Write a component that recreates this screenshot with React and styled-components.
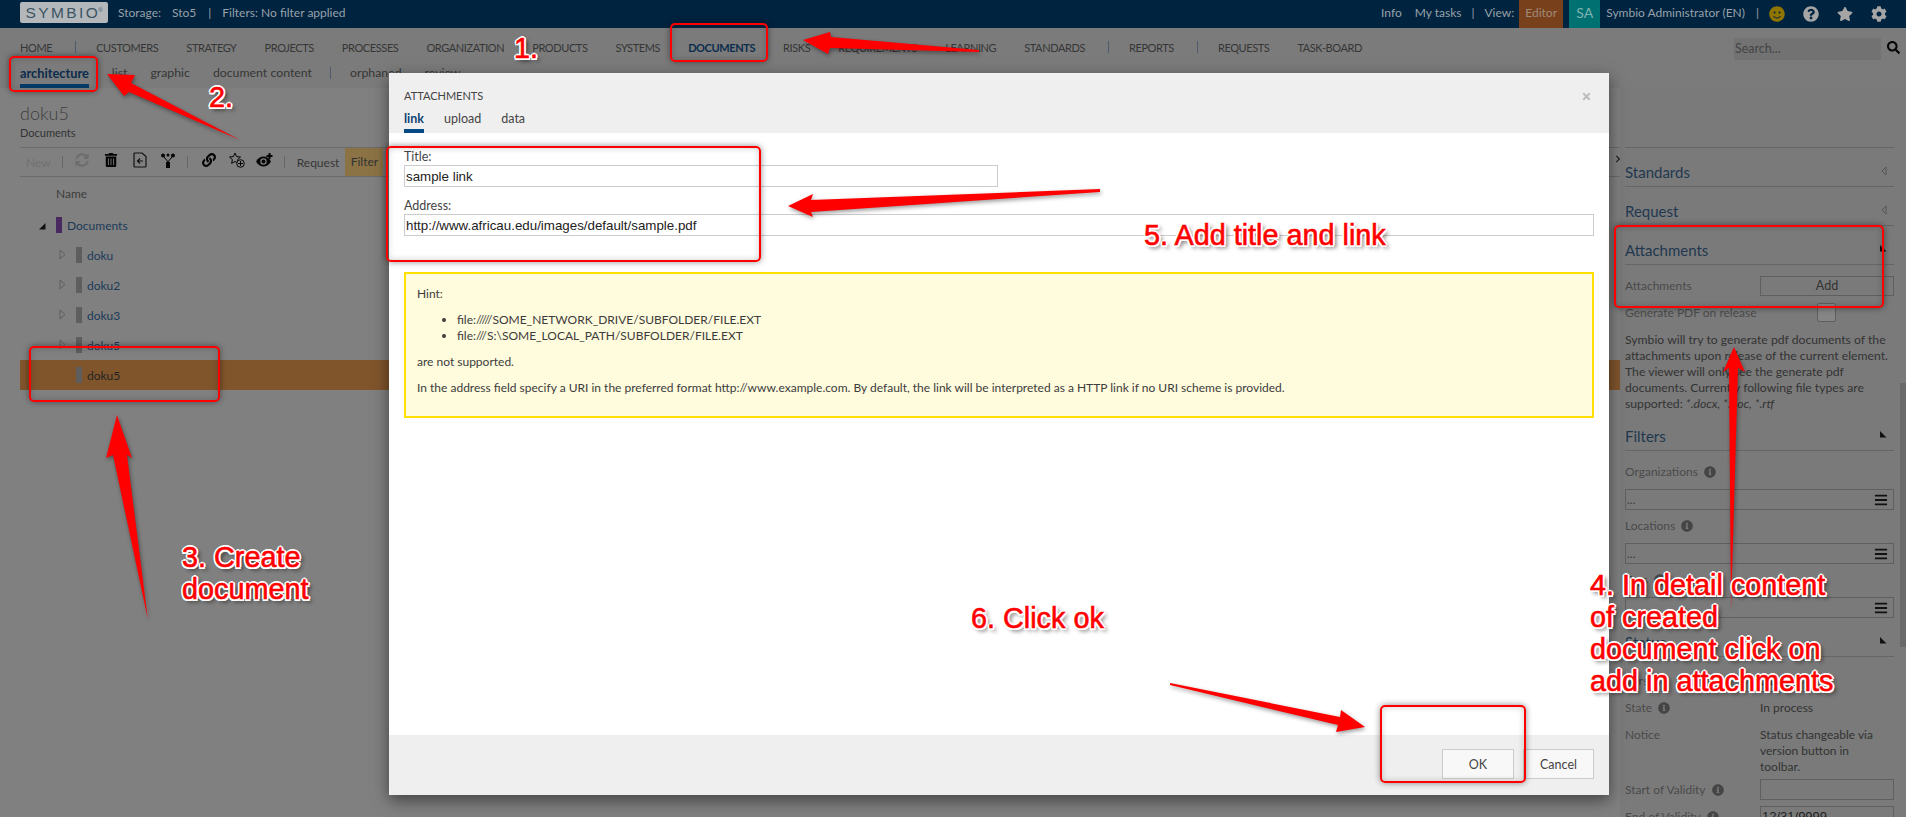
import React from "react";
import styled, { createGlobalStyle } from "styled-components";
import {
  FaBars,
  FaChevronRight,
  FaCog,
  FaInfoCircle,
  FaLink,
  FaQuestionCircle,
  FaSearch,
  FaSmile,
  FaStar,
  FaSyncAlt,
  FaTimes,
  FaTrashAlt,
} from "react-icons/fa";

const GlobalStyle = createGlobalStyle`
  html, body {
    margin: 0;
    height: 100%;
    overflow: hidden;
    background: #808080;
    font-family: Lato, "Open Sans", "Liberation Sans", sans-serif;
    font-size: 12px;
    color: #333;
  }
  * { box-sizing: border-box; }
`;

const Page = styled.div`
  position: relative;
  width: 1906px;
  height: 817px;
  overflow: hidden;
  display: flex;
  flex-direction: column;
`;

const TopBar = styled.header`
  height: 28px;
  flex: none;
  background: #00233f;
  color: #97a1aa;
  display: flex;
  align-items: stretch;
  padding: 0 19px 0 20px;
  font-size: 12px;
  line-height: 26px;
`;

const Logo = styled.div`
  width: 88px;
  height: 21px;
  margin: 2px 10px 0 0;
  background: #b4b8bb;
  border-radius: 2px;
  color: #3b5563;
  font-family: "Liberation Sans", sans-serif;
  font-size: 15.5px;
  line-height: 21px;
  letter-spacing: 2.4px;
  text-align: center;
  white-space: nowrap;
`;

const LogoMark = styled.sup`
  margin-left: -2px;
  font-size: 6px;
  letter-spacing: 0;
  line-height: 0;
`;

const TopText = styled.span`
  margin-left: ${({ $left }) => $left || 0}px;
  white-space: nowrap;
`;

const TopSpacer = styled.div`
  flex: 1;
`;

const EditorBadge = styled.span`
  width: 44px;
  margin: 0 6px 0 5px;
  background: #78401b;
  color: #a08a78;
  text-align: center;
`;

const UserBadge = styled.span`
  width: 31px;
  margin-right: 6px;
  background: #007070;
  color: #7fb3b3;
  text-align: center;
  font-size: 14px;
`;

const TopIcon = styled.span`
  display: flex;
  align-items: center;
  margin-left: ${({ $left }) => $left}px;
  color: ${({ $color }) => $color || "#a5a5a5"};
  font-size: 16px;
`;

const Nav = styled.nav`
  height: 60px;
  flex: none;
  position: relative;
  background: #7b7b7b;
  padding: 0 20px;
  color: #363636;
`;

const NavRow = styled.div`
  display: flex;
  align-items: center;
  height: 36px;
  padding-top: 2px;
  font-size: 11px;
  letter-spacing: -0.4px;
  white-space: nowrap;
`;

const NavItem = styled.span`
  margin-right: 28px;
  font-weight: ${({ $active }) => ($active ? 700 : 400)};
  color: ${({ $active }) => ($active ? "#0b2c4c" : "inherit")};
`;

const NavDivider = styled.span`
  width: 1px;
  height: 12px;
  margin: 0 20px 0 -5px;
  background: #4d5c6c;
`;

const SubRow = styled.div`
  display: flex;
  height: 24px;
  font-size: 12.3px;
  white-space: nowrap;
`;

const SubItem = styled.span`
  height: 24px;
  margin-right: 23px;
  font-size: ${({ $active }) => ($active ? "12.8px" : "inherit")};
  line-height: 18px;
  font-weight: ${({ $active }) => ($active ? 700 : 400)};
  color: ${({ $active }) => ($active ? "#0b2c4c" : "inherit")};
  border-bottom: ${({ $active }) => ($active ? "4px solid #063a68" : "0")};
`;

const SubDivider = styled(NavDivider)`
  margin: 3px 19px 0 -5px;
`;

const SearchBox = styled.div`
  position: absolute;
  top: 10px;
  left: 1734px;
  width: 147px;
  height: 22px;
  padding-left: 1px;
  background: #727272;
  color: #444;
  font-size: 12.5px;
  line-height: 22px;
`;

const SearchIcon = styled(FaSearch)`
  position: absolute;
  top: 13px;
  left: 1887px;
  font-size: 13px;
  color: #050505;
`;

const Main = styled.main`
  flex: 1;
  min-height: 0;
  display: flex;
`;

const LeftPanel = styled.section`
  width: 1620px;
  flex: none;
  padding: 14px 0 0 20px;
`;

const PageTitle = styled.h1`
  margin: 0;
  font-size: 18px;
  font-weight: 300;
  line-height: 22px;
  color: #3e3e3e;
`;

const PageSub = styled.div`
  height: 23px;
  font-size: 11px;
  line-height: 17px;
  color: #333;
`;

const Toolbar = styled.div`
  display: flex;
  align-items: center;
  height: 30px;
  border-top: 1px solid #6a6a6a;
  border-bottom: 1px solid #6a6a6a;
  font-size: 12px;
`;

const ToolText = styled.span`
  margin-left: ${({ $left }) => $left || 0}px;
  color: ${({ $muted }) => ($muted ? "#717171" : "#373737")};
`;

const ToolDivider = styled.span`
  width: 1px;
  height: 12px;
  margin-left: ${({ $left }) => $left}px;
  background: #666;
`;

const ToolIcon = styled.span`
  display: flex;
  align-items: center;
  margin-left: ${({ $left }) => $left}px;
  margin-top: -4px;
  color: ${({ $muted }) => ($muted ? "#6d6d6d" : "#050505")};
  font-size: 14px;
`;

const FilterButton = styled.span`
  width: 38px;
  height: 28px;
  margin-left: 6px;
  background: #8c7346;
  color: #333;
  line-height: 28px;
  text-align: center;
`;

const TreeHead = styled.div`
  height: 33px;
  padding-left: 36px;
  line-height: 34px;
  font-size: 12px;
  color: #3d3d3d;
`;

const TreeRow = styled.div`
  display: flex;
  align-items: center;
  height: 30px;
  padding-left: ${({ $level }) => ($level ? 39 : 19)}px;
  background: ${({ $selected }) => ($selected ? "#80552c" : "transparent")};
  font-size: 12px;
  color: ${({ $selected }) => ($selected ? "#242424" : "#1c3a58")};
`;

const Toggle = styled.span`
  width: 17px;
  flex: none;
`;

const ColorTag = styled.span`
  width: 6px;
  height: 16px;
  margin-right: 5px;
  background: ${({ $color }) => $color};
`;

const Sidebar = styled.aside`
  position: relative;
  flex: 1;
  min-width: 0;
  height: 729px;
  background: #7a7a7a;
  padding: 59px 12px 0 5px;
`;

const SidebarToggle = styled(FaChevronRight)`
  position: absolute;
  top: 67px;
  left: -6px;
  font-size: 8px;
  color: #222;
`;

const SidebarThumb = styled.div`
  position: absolute;
  top: 295px;
  right: 0;
  width: 6px;
  height: 264px;
  background: #6a6a6a;
`;

const SectionHead = styled.h3`
  display: flex;
  align-items: flex-end;
  justify-content: space-between;
  height: 39px;
  margin: 0;
  padding: 0 7px 4px 0;
  border-bottom: 1px solid #666;
  font-size: 15px;
  font-weight: 400;
  line-height: 20px;
  color: #1f3850;
`;

const SidebarTop = styled.div`
  border-top: 1px solid #666;
`;

const Row = styled.div`
  display: grid;
  grid-template-columns: 135px 134px;
  margin-top: ${({ $top }) => $top || 0}px;
  font-size: 12px;
  line-height: 16px;
`;

const Label = styled.span`
  display: flex;
  align-items: ${({ $top }) => ($top ? "flex-start" : "center")};
  gap: 6px;
  color: #4a4a4a;
  white-space: nowrap;
`;

const Value = styled.span`
  max-width: 118px;
  color: #333;
`;

const AddButton = styled.div`
  height: 20px;
  border: 1px solid #5f5f5f;
  color: #333;
  font-size: 12.5px;
  line-height: 17px;
  text-align: center;
`;

const Checkbox = styled.div`
  width: 19px;
  height: 19px;
  margin-left: 57px;
  border: 1px solid #5f5f5f;
  border-radius: 2px;
  background: #858585;
`;

const Help = styled.p`
  margin: 10px 0 0;
  font-size: 12.2px;
  line-height: 16px;
  color: #333;
`;

const FieldLabel = styled.div`
  display: flex;
  align-items: center;
  gap: 6px;
  margin-top: ${({ $top }) => $top}px;
  margin-bottom: 9px;
  font-size: 12px;
  line-height: 16px;
  color: #4a4a4a;
`;

const SelectField = styled.div`
  display: flex;
  align-items: center;
  justify-content: space-between;
  height: 21px;
  padding: 0 5px 0 1px;
  border: 1px solid #5f5f5f;
  font-size: 12px;
  line-height: 16px;
  color: #3c3c3c;
`;

const DateField = styled.div`
  height: 21px;
  border: 1px solid #5f5f5f;
  padding-left: 1px;
  font-family: "Liberation Sans", sans-serif;
  font-size: 13px;
  line-height: 20px;
  color: #222;
`;

const Modal = styled.div`
  position: absolute;
  top: 73px;
  left: 389px;
  width: 1220px;
  height: 722px;
  display: flex;
  flex-direction: column;
  background: #fff;
  box-shadow: 0 5px 15px rgba(0, 0, 0, 0.5);
`;

const ModalHead = styled.div`
  position: relative;
  height: 60px;
  flex: none;
  padding: 15px 15px 0;
  background: #efefef;
  color: #444;
`;

const ModalTitle = styled.div`
  font-size: 11px;
  line-height: 16px;
`;

const CloseIcon = styled(FaTimes)`
  position: absolute;
  top: 18px;
  right: 17px;
  color: #bcbcbc;
  font-size: 11px;
`;

const Tabs = styled.div`
  display: flex;
  gap: 20px;
  margin-top: 6px;
`;

const Tab = styled.span`
  height: 23px;
  font-size: 12.5px;
  line-height: 17px;
  font-weight: ${({ $active }) => ($active ? 700 : 400)};
  color: ${({ $active }) => ($active ? "#0f4474" : "#444")};
  border-bottom: ${({ $active }) => ($active ? "4px solid #064a85" : "0")};
`;

const ModalBody = styled.div`
  flex: 1;
  padding: 16px 15px 0;
`;

const FormLabel = styled.label`
  display: block;
  margin-top: ${({ $top }) => $top || 0}px;
  font-size: 12.5px;
  line-height: 16px;
  color: #444;
`;

const TextInput = styled.input`
  display: block;
  width: ${({ $wide }) => ($wide ? "100%" : "594px")};
  height: 22px;
  padding: 0 1px;
  border: 1px solid #ccc;
  outline: none;
  font-family: "Liberation Sans", sans-serif;
  font-size: 13.33px;
  color: #222;
`;

const HintBox = styled.div`
  height: 146px;
  margin-top: 36px;
  padding: 12px 11px 0;
  border: 2px solid #ffe000;
  background: #fffbdd;
  font-size: 12px;
  line-height: 16px;
  color: #3c3c3c;
  p {
    margin: 0 0 10px;
  }
  ul {
    margin: 0 0 10px;
    padding-left: 40px;
  }
`;

const ModalFoot = styled.div`
  display: flex;
  justify-content: flex-end;
  gap: 9px;
  height: 60px;
  flex: none;
  padding: 14px 15px 0;
  background: #efefef;
`;

const FootButton = styled.button`
  width: ${({ $width }) => $width}px;
  height: 30px;
  padding: 0;
  border: 1px solid #ccc;
  background: #f8f8f8;
  font-family: inherit;
  font-size: 12.5px;
  color: #444;
`;

const Mark = styled.div`
  position: absolute;
  left: ${({ $x }) => $x}px;
  top: ${({ $y }) => $y}px;
  width: ${({ $w }) => $w}px;
  height: ${({ $h }) => $h}px;
  border: 2px solid #f00;
  border-radius: 5px;
  box-shadow: 0 0 6px rgba(0, 0, 0, 0.45), inset 0 0 6px rgba(0, 0, 0, 0.2);
`;

const Note = styled.div`
  position: absolute;
  left: ${({ $x }) => $x}px;
  top: ${({ $y }) => $y}px;
  font-family: "Liberation Sans", sans-serif;
  font-size: 28.8px;
  line-height: 32px;
  color: #f00;
  white-space: nowrap;
  -webkit-text-stroke: 0.6px #f00;
  text-shadow: 2px 0 0 #fff, -2px 0 0 #fff, 0 2px 0 #fff, 0 -2px 0 #fff,
    1.5px 1.5px 0 #fff, -1.5px -1.5px 0 #fff, 1.5px -1.5px 0 #fff, -1.5px 1.5px 0 #fff,
    3px 3px 4px rgba(0, 0, 0, 0.7);
`;

const Arrows = styled.svg`
  position: absolute;
  top: 0;
  left: 0;
  filter: drop-shadow(1px 2px 2px rgba(0, 0, 0, 0.4));
  pointer-events: none;
`;

const navItems = ["CUSTOMERS", "STRATEGY", "PROJECTS", "PROCESSES", "ORGANIZATION", "PRODUCTS", "SYSTEMS"];
const navItems2 = ["RISKS", "REQUIREMENTS", "LEARNING", "STANDARDS"];

const arrowShapes = [
  "803,40 830,32 831,37 979,50 979,52 830,48 828,54",
  "107,74 135,75 131,83 240,140 129,92 124,96",
  "117,415 132,458 127,455 148,620 113,455 106,458",
  "788,206 813,194 811,200 1100,189 1100,192 811,212 813,217",
  "1734,347 1745,372 1738,368 1731,610 1729,368 1723,372",
  "1170,683 1340,717 1341,710 1365,727 1336,732 1338,725 1170,685",
];

const TreeArrow = ({ open }) =>
  open ? (
    <svg width="7" height="7" viewBox="0 0 7 7">
      <path d="M0 6.500h6.500V0z" fill="#111" />
    </svg>
  ) : (
    <svg width="7" height="11" viewBox="0 0 7 11">
      <path d="M1 1l5 4.500L1 10z" fill="none" stroke="#5e5e5e" />
    </svg>
  );

const SectionArrow = ({ open }) =>
  open ? (
    <svg width="7" height="7" viewBox="0 0 7 7" style={{ marginBottom: 8 }}>
      <path d="M0 0l6.500 6.500H0z" fill="#111" />
    </svg>
  ) : (
    <svg width="6" height="10" viewBox="0 0 6 10" style={{ marginBottom: 6 }}>
      <path d="M5 1L1 5l4 4z" fill="none" stroke="#555" />
    </svg>
  );

const DocIcon = () => (
  <svg width="14" height="16" viewBox="0 0 14 16" fill="none" stroke="#111" strokeWidth="1.2">
    <path d="M2 1h7l4 3.500V14a1 1 0 0 1-1 1H2a1 1 0 0 1-1-1V2a1 1 0 0 1 1-1z" />
    <path d="M10 9H4.500M7 6.500L4.500 9 7 11.500" />
  </svg>
);

const TreeIcon = () => (
  <svg width="14" height="15" viewBox="0 0 14 15" fill="#050505">
    <circle cx="2" cy="2.500" r="2" />
    <circle cx="12" cy="2.500" r="2" />
    <circle cx="7" cy="2" r="1.500" />
    <rect x="5" y="9" width="4" height="6" />
    <path d="M2 2.500L7 9l5-6.500" fill="none" stroke="#050505" />
  </svg>
);

const StarPlus = () => (
  <svg width="16" height="16" viewBox="0 0 16 16" fill="none" stroke="#050505">
    <path d="M6 1l1.600 3.600 3.900.4-2.900 2.600.8 3.800L6 9.500 2.600 11.400l.8-3.800L.5 5l3.900-.4z" />
    <circle cx="11.500" cy="11.500" r="3.800" fill="#808080" />
    <path d="M11.500 9v5M9 11.500h5" />
  </svg>
);

const EyePlus = () => (
  <svg width="17" height="15" viewBox="0 0 17 15">
    <path d="M0 8.500C2 5 4.500 3.500 7.500 3.500s5.500 1.500 7.500 5c-2 3.500-4.500 5-7.500 5S2 12 0 8.500z" fill="#050505" />
    <circle cx="7.500" cy="8.500" r="3.200" fill="#808080" />
    <circle cx="7.500" cy="8.500" r="2" fill="#050505" />
    <path d="M13.500 0v6M10.500 3h6" stroke="#050505" strokeWidth="2" />
  </svg>
);

const App = () => (
  <Page>
    <GlobalStyle />
    <TopBar>
      <Logo>
        SYMBIO<LogoMark>®</LogoMark>
      </Logo>
      <TopText>Storage:</TopText>
      <TopText $left={11}>Sto5</TopText>
      <TopText $left={12}>|</TopText>
      <TopText $left={11}>Filters: No filter applied</TopText>
      <TopSpacer />
      <TopText>Info</TopText>
      <TopText $left={13}>My tasks</TopText>
      <TopText $left={10}>|</TopText>
      <TopText $left={10}>View:</TopText>
      <EditorBadge>Editor</EditorBadge>
      <UserBadge>SA</UserBadge>
      <TopText>Symbio Administrator (EN)</TopText>
      <TopText $left={11}>|</TopText>
      <TopIcon $left={10} $color="#8f7500">
        <FaSmile />
      </TopIcon>
      <TopIcon $left={18}>
        <FaQuestionCircle />
      </TopIcon>
      <TopIcon $left={18}>
        <FaStar />
      </TopIcon>
      <TopIcon $left={18}>
        <FaCog />
      </TopIcon>
    </TopBar>

    <Nav>
      <NavRow>
        <NavItem>HOME</NavItem>
        <NavDivider />
        {navItems.map((item) => (
          <NavItem key={item}>{item}</NavItem>
        ))}
        <NavItem $active>DOCUMENTS</NavItem>
        {navItems2.map((item) => (
          <NavItem key={item}>{item}</NavItem>
        ))}
        <NavDivider />
        <NavItem>REPORTS</NavItem>
        <NavDivider />
        <NavItem>REQUESTS</NavItem>
        <NavItem>TASK-BOARD</NavItem>
      </NavRow>
      <SubRow>
        <SubItem $active>architecture</SubItem>
        <SubItem>list</SubItem>
        <SubItem>graphic</SubItem>
        <SubItem>document content</SubItem>
        <SubDivider />
        <SubItem>orphaned</SubItem>
        <SubItem>review</SubItem>
      </SubRow>
      <SearchBox>Search...</SearchBox>
      <SearchIcon />
    </Nav>

    <Main>
      <LeftPanel>
        <PageTitle>doku5</PageTitle>
        <PageSub>Documents</PageSub>
        <Toolbar>
          <ToolText $left={6} $muted>
            New
          </ToolText>
          <ToolDivider $left={11} />
          <ToolIcon $left={12} $muted>
            <FaSyncAlt />
          </ToolIcon>
          <ToolIcon $left={15}>
            <FaTrashAlt />
          </ToolIcon>
          <ToolIcon $left={15}>
            <DocIcon />
          </ToolIcon>
          <ToolIcon $left={14}>
            <TreeIcon />
          </ToolIcon>
          <ToolDivider $left={12} />
          <ToolIcon $left={14}>
            <FaLink />
          </ToolIcon>
          <ToolIcon $left={13}>
            <StarPlus />
          </ToolIcon>
          <ToolIcon $left={11}>
            <EyePlus />
          </ToolIcon>
          <ToolDivider $left={11} />
          <ToolText $left={12}>Request</ToolText>
          <FilterButton>Filter</FilterButton>
        </Toolbar>
        <TreeHead>Name</TreeHead>
        <TreeRow>
          <Toggle>
            <TreeArrow open />
          </Toggle>
          <ColorTag $color="#48285f" />
          Documents
        </TreeRow>
        {["doku", "doku2", "doku3", "doku5"].map((name) => (
          <TreeRow $level={1} key={name + "row"}>
            <Toggle>
              <TreeArrow />
            </Toggle>
            <ColorTag $color="#5e5e5e" />
            {name}
          </TreeRow>
        ))}
        <TreeRow $level={1} $selected>
          <Toggle />
          <ColorTag $color="#5e5e5e" />
          doku5
        </TreeRow>
      </LeftPanel>

      <Sidebar>
        <SidebarToggle />
        <SidebarTop />
        <SectionHead>
          Standards
          <SectionArrow />
        </SectionHead>
        <SectionHead>
          Request
          <SectionArrow />
        </SectionHead>
        <SectionHead>
          Attachments
          <SectionArrow open />
        </SectionHead>
        <Row $top={11}>
          <Label>Attachments</Label>
          <AddButton>Add</AddButton>
        </Row>
        <Row $top={7}>
          <Label>Generate PDF on release</Label>
          <Checkbox />
        </Row>
        <Help>
          Symbio will try to generate pdf documents of the attachments upon release of the current element. The viewer
          will only see the generate pdf documents. Currently following file types are supported:{" "}
          <em>*.docx, *.doc, *.rtf</em>
        </Help>
        <SectionHead>
          Filters
          <SectionArrow open />
        </SectionHead>
        <FieldLabel $top={13}>
          Organizations <FaInfoCircle color="#454545" size={12} />
        </FieldLabel>
        <SelectField>
          ...
          <FaBars color="#111" size={14} />
        </SelectField>
        <FieldLabel $top={8}>
          Locations <FaInfoCircle color="#454545" size={12} />
        </FieldLabel>
        <SelectField>
          ...
          <FaBars color="#111" size={14} />
        </SelectField>
        <FieldLabel $top={8}>
          Tags <FaInfoCircle color="#454545" size={12} />
        </FieldLabel>
        <SelectField>
          ...
          <FaBars color="#111" size={14} />
        </SelectField>
        <SectionHead>
          Status
          <SectionArrow open />
        </SectionHead>
        <Row $top={16}>
          <Label>Version</Label>
          <Value>01</Value>
        </Row>
        <Row $top={11}>
          <Label>
            State <FaInfoCircle color="#454545" size={12} />
          </Label>
          <Value>In process</Value>
        </Row>
        <Row $top={11}>
          <Label $top>Notice</Label>
          <Value>Status changeable via version button in toolbar.</Value>
        </Row>
        <Row $top={4}>
          <Label>
            Start of Validity <FaInfoCircle color="#454545" size={12} />
          </Label>
          <DateField />
        </Row>
        <Row $top={6}>
          <Label>
            End of Validity <FaInfoCircle color="#454545" size={12} />
          </Label>
          <DateField>12/31/9999</DateField>
        </Row>
        <SidebarThumb />
      </Sidebar>
    </Main>

    <Modal>
      <ModalHead>
        <ModalTitle>ATTACHMENTS</ModalTitle>
        <CloseIcon />
        <Tabs>
          <Tab $active>link</Tab>
          <Tab>upload</Tab>
          <Tab>data</Tab>
        </Tabs>
      </ModalHead>
      <ModalBody>
        <FormLabel>Title:</FormLabel>
        <TextInput defaultValue="sample link" />
        <FormLabel $top={11}>Address:</FormLabel>
        <TextInput $wide defaultValue="http://www.africau.edu/images/default/sample.pdf" />
        <HintBox>
          <p>Hint:</p>
          <ul>
            <li>file://///SOME_NETWORK_DRIVE/SUBFOLDER/FILE.EXT</li>
            <li>file:///S:\SOME_LOCAL_PATH/SUBFOLDER/FILE.EXT</li>
          </ul>
          <p>are not supported.</p>
          <p>
            In the address field specify a URI in the preferred format http://www.example.com. By default, the link will
            be interpreted as a HTTP link if no URI scheme is provided.
          </p>
        </HintBox>
      </ModalBody>
      <ModalFoot>
        <FootButton $width={72}>OK</FootButton>
        <FootButton $width={71}>Cancel</FootButton>
      </ModalFoot>
    </Modal>

    <Arrows width="1906" height="817" viewBox="0 0 1906 817">
      {arrowShapes.map((points) => (
        <polygon key={points} points={points} fill="#f00" />
      ))}
    </Arrows>

    <Mark $x={670} $y={23} $w={98} $h={39} />
    <Mark $x={9} $y={56} $w={89} $h={36} />
    <Mark $x={29} $y={346} $w={191} $h={56} />
    <Mark $x={386} $y={146} $w={375} $h={116} />
    <Mark $x={1614} $y={225} $w={270} $h={83} />
    <Mark $x={1380} $y={705} $w={146} $h={78} />

    <Note $x={514} $y={32}>1.</Note>
    <Note $x={209} $y={81}>2.</Note>
    <Note $x={182} $y={541}>
      3. Create
      <br />
      document
    </Note>
    <Note $x={1590} $y={569}>
      4. In detail content
      <br />
      of created
      <br />
      document click on
      <br />
      add in attachments
    </Note>
    <Note $x={1144} $y={219}>5. Add title and link</Note>
    <Note $x={971} $y={602}>6. Click ok</Note>
  </Page>
);

export default App;
